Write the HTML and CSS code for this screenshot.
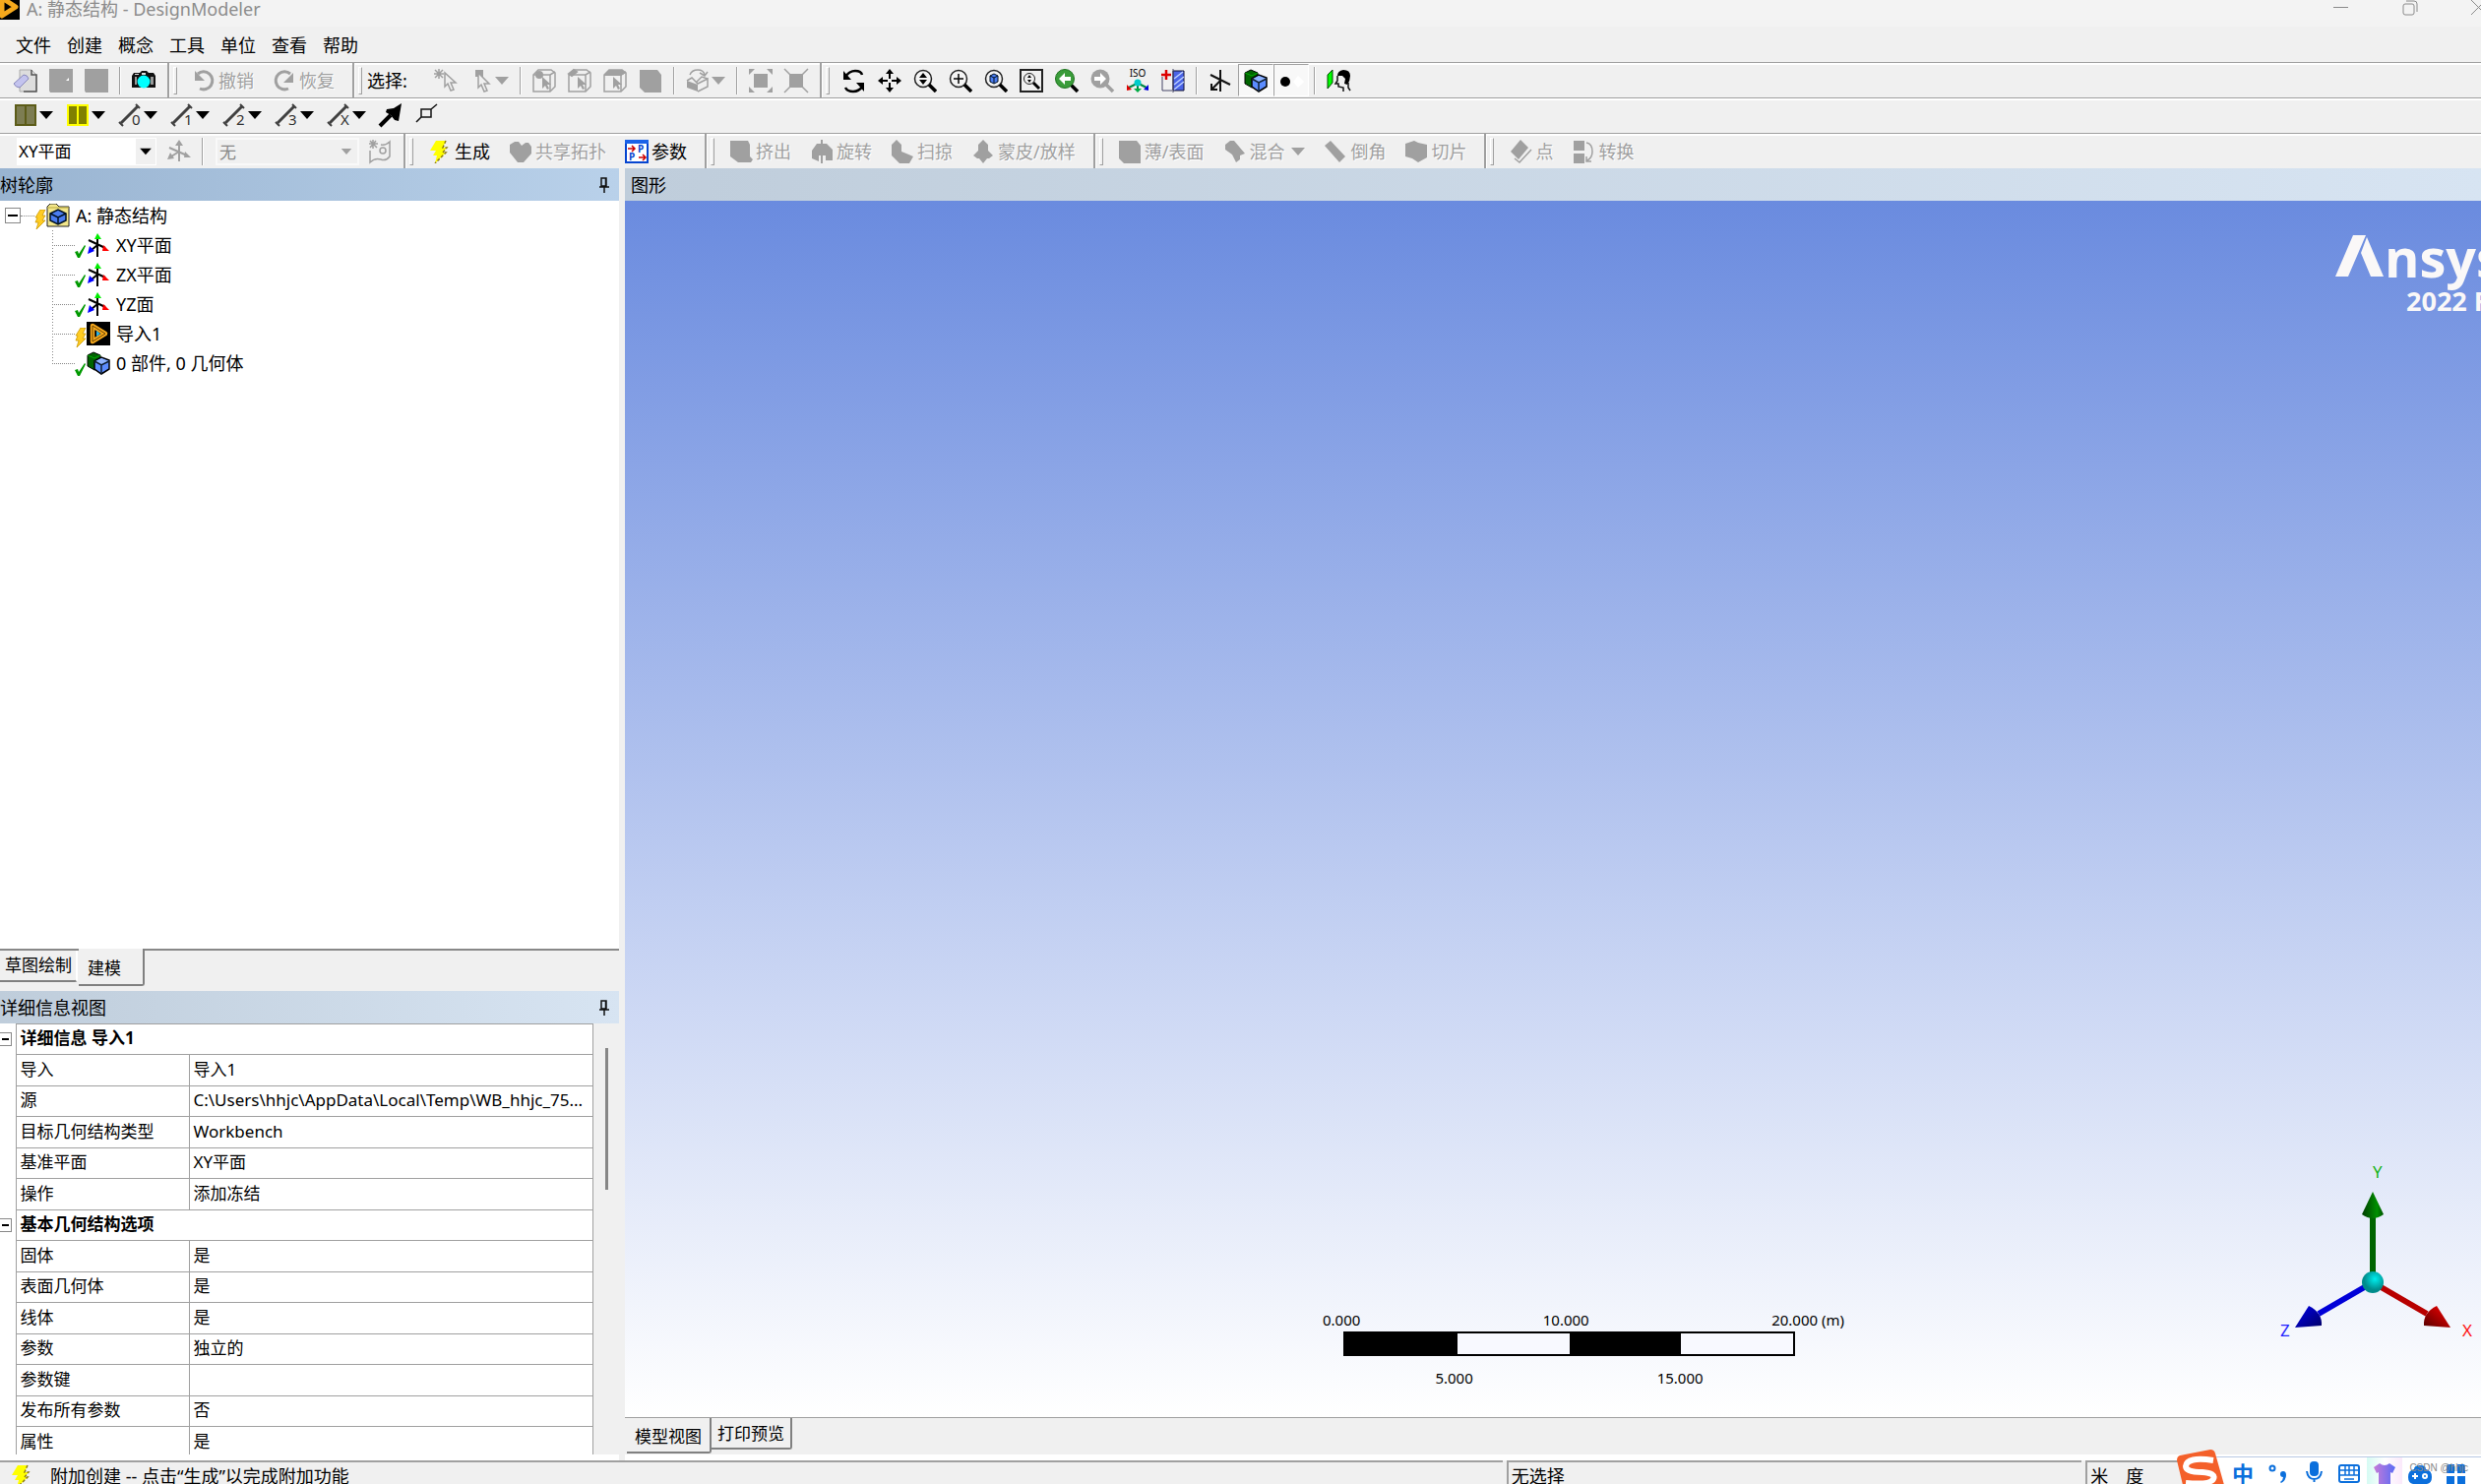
FILE: index.html
```html
<!DOCTYPE html>
<html lang="zh-CN">
<head>
    <meta charset="UTF-8">
    <meta name="viewport" content="width=device-width, initial-scale=1.0">
    <title>A: 静态结构 - DesignModeler</title>
    <link rel="stylesheet" href="styles.css">
</head>
<body>
    <!-- shared icons -->
    <svg class="defs" aria-hidden="true">
        <symbol id="down" viewBox="0 0 14 24"><path d="M0 8h14l-7 8z" fill="currentColor"/></symbol>
        <symbol id="bolt" viewBox="0 0 24 24"><path d="M8 1h10l-3 7h4l-4 5h3L7 24l2-8H5l3-5H2z" fill="#ff0"/><path d="M18 1l-3 7h4l-4 5h3L7 24" fill="none" stroke="#8a7a10" stroke-width="1.500" stroke-dasharray="3 2"/></symbol>
        <symbol id="smallbolt" viewBox="0 0 12 20"><path d="M6 0h5L8 6h3l-3 5h3L2 20l2-7H1l2-5H1z" fill="#fc2" stroke="#c90" stroke-width=".8"/></symbol>
        <symbol id="check" viewBox="0 0 12 20"><path d="M0 13l3-1 1 3 6-9 1 1-6 12H3z" fill="#090"/></symbol>
        <symbol id="axis" viewBox="0 0 24 24"><path d="M11 4v20M2 7l17 8M11 12l-6 5" stroke="#000" stroke-width="2" fill="none"/><path d="M8 6l3-6 4 6z" fill="#0e0"/><path d="M17 12l6 6h-7z" fill="#f00"/><path d="M3 13l5 5-7 3z" fill="#00f"/></symbol>
        <symbol id="cubes" viewBox="0 0 24 24"><path d="M1 4l6-3 7 3v12l-6 3-7-4z" fill="#006400" stroke="#000"/><path d="M1 4l7 3 6-3" fill="none" stroke="#0a0"/><path d="M8 10l7-4 8 3v9l-8 5-7-5z" fill="#5b8cff" stroke="#000" stroke-width="1.500"/><path d="M9 10l6-3 7 3-7 3z" fill="#8fb4ff"/><path d="M8 10l7 4 8-4M15 14v9" fill="none" stroke="#123" stroke-width="1.500"/></symbol>
        <symbol id="line" viewBox="0 0 24 24"><path d="M3 20L20 3" stroke="#404040" stroke-width="3"/><path d="M1 19l4 4M18 1l4 4" stroke="#404040" stroke-width="2"/></symbol>
        <symbol id="lens" viewBox="0 0 24 24"><circle cx="10" cy="10" r="8.500" fill="#f4f4f4" stroke="#222" stroke-width="1.500"/><path d="M16 16l7 7" stroke="#000" stroke-width="3.500"/></symbol>
        <symbol id="cube" viewBox="0 0 24 24"><path d="M1 6v17h17l5-5V4l-4-3H6z" fill="none" stroke="#a0a0a0" stroke-width="1.500"/><path d="M1 6h17l5-3M18 6v17" fill="none" stroke="#a0a0a0" stroke-width="1.500"/></symbol>
        <symbol id="cursor" viewBox="0 0 24 24"><path d="M11 4v14l3-3 3 7 3-1-3-7h5z" fill="none" stroke="#a0a0a0" stroke-width="1.500"/></symbol>
        <symbol id="minicursor" viewBox="0 0 24 24"><path d="M10 8v12l3-3 2 4 2-1-2-4h4z" fill="#a0a0a0"/></symbol>
        <symbol id="solid" viewBox="0 0 24 24"><path d="M1 1h18l4 5v18H6l-5-5z" fill="#a0a0a0"/></symbol>
        <symbol id="pin" viewBox="0 0 12 20"><path d="M3 3h5v8H3zM7.500 3v8M1 12h10M6 12v6" fill="none" stroke="#111" stroke-width="1.500"/></symbol>
        <symbol id="dm" viewBox="0 0 24 24"><rect width="24" height="24" fill="#000"/><path d="M6 4l13 8-13 8z" fill="none" stroke="#f5a81c" stroke-width="4.500" stroke-linejoin="round"/><path d="M6 4l13 8-13 8z" fill="none" stroke="#6b4400"/><path d="M10 9l4 3-4 3z" fill="#29b6e8"/></symbol>
    </svg>

    <header class="titlebar">
        <svg class="app-icon" viewBox="0 0 20 20"><path d="M0 0h20v20H0z"/><path d="M2-2l14 9-14 9z" fill="none" stroke="#f5a81c" stroke-width="5" stroke-linejoin="round"/></svg>
        <span class="title">A: 静态结构 - DesignModeler</span>
        <button class="win-btn" aria-label="最小化"><svg viewBox="0 0 16 16"><path d="M0 7.500h15"/></svg></button>
        <button class="win-btn" aria-label="还原"><svg viewBox="0 0 16 16"><rect x="1" y="4" width="11" height="11" rx="2"/><path d="M4 1h8q3 0 3 3v8"/></svg></button>
        <button class="win-btn" aria-label="关闭"><svg viewBox="0 0 16 16"><path d="M0 0l15 15M15 0L0 15"/></svg></button>
    </header>

    <nav class="menubar">
        <button>文件</button><button>创建</button><button>概念</button><button>工具</button><button>单位</button><button>查看</button><button>帮助</button>
    </nav>

    <div class="toolbar">
        <div class="band first">
            <button class="tool" aria-label="新建"><svg viewBox="0 0 24 24"><path d="M6 1h12l5 5v17H6z" fill="#ddd" stroke="#aaa"/><path d="M18 1v5h5v17H10" fill="none" stroke="#555" stroke-width="1.500"/><path d="M0 15L10 6q4 0 5 4L6 19q-4 0-6-4z" fill="#c3c3ee" stroke="#88b"/></svg></button>
            <button class="tool" disabled aria-label="打开"><svg viewBox="0 0 24 24"><path d="M0 0h24v24H1l-1-2z" fill="#a0a0a0"/><path d="M17 12l3-3v3z" fill="#fff"/></svg></button>
            <button class="tool" disabled aria-label="保存"><svg viewBox="0 0 24 24"><path d="M0 0h24v24H1l-1-2z" fill="#a0a0a0"/></svg></button>
            <i class="sep"></i>
            <button class="tool" aria-label="截图"><svg viewBox="0 0 24 24"><path d="M0 7l2-3h6l2-2h5l2 2h5l2 3v12H0z" fill="#111"/><path d="M3 8h2v8H3zM19 8h3v8h-3z" fill="#999"/><path d="M10 4h4v2h-4zM3 5h4v1H3z" fill="#ddd"/><circle cx="12" cy="13" r="6.500" fill="#0ff"/></svg></button>
        </div>
        <div class="band text-band">
            <i class="grip"></i>
            <button class="tool" disabled><svg viewBox="0 0 24 24"><path d="M6 5a9 9 0 1 1 2 15" fill="none" stroke="#a0a0a0" stroke-width="3"/><path d="M3 2v10h10z" fill="#a0a0a0"/></svg>撤销</button>
            <button class="tool" disabled><svg viewBox="0 0 24 24"><path d="M18 5a9 9 0 1 0-2 15" fill="none" stroke="#a0a0a0" stroke-width="3"/><path d="M21 4v10H11z" fill="#a0a0a0"/></svg>恢复</button>
        </div>
        <div class="band">
            <i class="grip"></i>
            <span class="label">选择:</span>
            <button class="tool" disabled aria-label="新选择"><svg viewBox="0 0 24 24"><path d="M5 0v10M0 5h10M1 1l8 8M9 1L1 9" stroke="#a0a0a0" stroke-width="1.500"/><use href="#cursor"/></svg></button>
            <button class="tool split" disabled aria-label="选择模式"><svg viewBox="0 0 24 24"><path d="M6 1h8v7H6z" fill="#a0a0a0"/><path d="M9 4v15l3-3 3 7 3-1-3-7h5z" fill="#f0f0f0" stroke="#a0a0a0" stroke-width="1.500"/></svg><svg class="down"><use href="#down"/></svg></button>
            <i class="sep"></i>
            <button class="tool" disabled aria-label="点"><svg viewBox="0 0 24 24"><use href="#cube"/><circle cx="7" cy="6" r="4" fill="#a0a0a0"/><use href="#minicursor"/></svg></button>
            <button class="tool" disabled aria-label="边"><svg viewBox="0 0 24 24"><use href="#cube"/><path d="M1 5l5-4 3 2-5 4z" fill="#a0a0a0" stroke="#a0a0a0" stroke-width="2"/><use href="#minicursor"/></svg></button>
            <button class="tool" disabled aria-label="面"><svg viewBox="0 0 24 24"><use href="#cube"/><path d="M1 6l5-5h13l4 3-5 3H1z" fill="#a0a0a0"/><use href="#minicursor"/></svg></button>
            <button class="tool" disabled aria-label="体"><svg><use href="#solid"/></svg></button>
            <i class="sep"></i>
            <button class="tool split" disabled aria-label="扩展选择"><svg viewBox="0 0 24 24"><path d="M1 12l11 4v7L1 19z" fill="#a0a0a0"/><path d="M1 12l5-3 6 6 10-5v8l-10 5M22 10l-6-2-5 5M4 6q2-5 8-5 6 0 7 5M14 4l5 3 3-4" fill="none" stroke="#a0a0a0" stroke-width="1.500"/></svg><svg class="down"><use href="#down"/></svg></button>
            <i class="sep"></i>
            <button class="tool" disabled aria-label="扩展"><svg viewBox="0 0 24 24"><path d="M5 5h14v14H5zM0 0h6L0 6zM24 0v6l-6-6zM0 24v-6l6 6zM24 24h-6l6-6z" fill="#a0a0a0"/></svg></button>
            <button class="tool" disabled aria-label="收缩"><svg viewBox="0 0 24 24"><path d="M5 5h14v14H5z" fill="#a0a0a0"/><path d="M0 0l8 8M24 0l-8 8M0 24l8-8M24 24l-8-8" stroke="#a0a0a0" stroke-width="1.500"/></svg></button>
        </div>
        <div class="band last">
            <i class="grip"></i>
            <button class="tool" aria-label="旋转"><svg viewBox="0 0 24 24"><path d="M3 8q4-6 10-6 6 0 7 4M21 17q-4 6-10 6-6 0-8-4" fill="none" stroke="#000" stroke-width="2.500"/><path d="M1 2v9h8zM22 23v-9h-8z"/></svg></button>
            <button class="tool" aria-label="平移"><svg viewBox="0 0 24 24"><path d="M12 3v7M12 14v7M3 12h7M14 12h7" stroke="#000" stroke-width="2"/><path d="M8 5l4-5 4 5zM8 19l4 5 4-5zM5 8l-5 4 5 4zM19 8l5 4-5 4z"/></svg></button>
            <button class="tool" aria-label="缩放"><svg viewBox="0 0 24 24"><use href="#lens"/><path d="M6 9l4-5 4 5zM6 11h8l-4 5z"/></svg></button>
            <button class="tool" aria-label="框放大"><svg viewBox="0 0 24 24"><use href="#lens"/><path d="M10 5v10M5 10h10" stroke="#000" stroke-width="1.500"/></svg></button>
            <button class="tool" aria-label="适合窗口"><svg viewBox="0 0 24 24"><use href="#lens"/><path d="M6 7l4-2 4 2v6l-4 2-4-2z" fill="#4a7cf0" stroke="#012"/><path d="M6 7l4 2 4-2M10 9v6" fill="none" stroke="#012"/></svg></button>
            <button class="tool" aria-label="放大镜"><svg viewBox="0 0 24 24"><path d="M1 1h22v22H1z" fill="none" stroke="#222" stroke-width="2"/><circle cx="10" cy="10" r="5.500" fill="none" stroke="#222"/><path d="M14 14l6 6" stroke="#000" stroke-width="3"/><path d="M8 9l2-3 2 3zM8 11h4l-2 3z"/></svg></button>
            <button class="tool" aria-label="上一视图"><svg viewBox="0 0 24 24"><path d="M16 16l7 7" stroke="#000" stroke-width="3.500"/><circle cx="10" cy="10" r="9.500" fill="#3a9c3a" stroke="#1d731d"/><path d="M4 10l6-6v4h6v4h-6v4z" fill="#fff"/></svg></button>
            <button class="tool" disabled aria-label="下一视图"><svg viewBox="0 0 24 24"><path d="M16 16l7 7" stroke="#a0a0a0" stroke-width="3.500"/><circle cx="10" cy="10" r="9.500" fill="#a0a0a0"/><path d="M16 10l-6-6v4H4v4h6v4z" fill="#fff"/></svg></button>
            <button class="tool" aria-label="等轴测"><svg viewBox="0 0 24 24"><text x="12" y="8" class="iso">ISO</text><path d="M12 15v7M11 15l-8 4M13 15l8 4" stroke="#084" stroke-width="2"/><circle cx="12" cy="14" r="3.500" fill="#0cc"/><path d="M1 16v6l5-1z" fill="#d00"/><path d="M23 16v6l-5-1z" fill="#00d"/><path d="M8 20h8l-4 4z" fill="#0a4"/></svg></button>
            <button class="tool" aria-label="观察面"><svg viewBox="0 0 24 24"><path d="M12 2h11v20H12z" fill="#4a63e6" stroke="#113"/><path d="M13 10l9-7M13 16l10-8M13 21l10-8" stroke="#bcd0ff" stroke-width="1.500"/><path d="M1 8v14h10M12 0v24" fill="none" stroke="#446"/><path d="M5 1v10M0 6h10" stroke="#d00" stroke-width="2.500"/></svg></button>
            <i class="sep"></i>
            <button class="tool" aria-label="显示平面"><svg viewBox="0 0 24 24"><path d="M12 1v22M2 6l20 10M12 12l-8 8M3 15v6h6" fill="none" stroke="#111" stroke-width="2"/></svg></button>
            <button class="tool pressed" aria-label="显示模型"><svg><use href="#cubes"/></svg></button>
            <button class="tool pressed" aria-label="显示点"><svg viewBox="0 0 24 24"><circle cx="6" cy="13" r="5"/><path d="M19 7l6 6-6 6-5-6z" fill="#fff"/></svg></button>
            <i class="sep"></i>
            <button class="tool" aria-label="显示面"><svg viewBox="0 0 24 24"><path d="M1 6l5-5v13l-5 6z" fill="#0f0" stroke="#040"/><path d="M11 7v5l-2 3h3v3l5 1v4M22 14v5l2 3" fill="none" stroke="#111" stroke-width="1.500"/><path d="M11 7q0-5 6-6 7 0 7 6 0 5-3 9l-3-1 1-5-3-3z"/></svg></button>
        </div>
    </div>

    <div class="toolbar lines">
        <button class="tool split" aria-label="面颜色"><svg viewBox="0 0 24 24"><path d="M2 2h20v20H2z" fill="#7d7d52" stroke="#5c5c18" stroke-width="2"/><path d="M12 2v20" stroke="#5c5c18" stroke-width="2"/></svg><svg class="down"><use href="#down"/></svg></button>
        <button class="tool split" aria-label="边颜色"><svg viewBox="0 0 24 24"><path d="M2 2h20v20H2z" fill="#808000" stroke="#ff0" stroke-width="2"/><path d="M12 2v20" stroke="#ff0" stroke-width="2"/></svg><svg class="down"><use href="#down"/></svg></button>
        <button class="tool split" aria-label="边 0"><svg viewBox="0 0 24 24"><use href="#line"/><text x="14" y="22" class="num">0</text></svg><svg class="down"><use href="#down"/></svg></button>
        <button class="tool split" aria-label="边 1"><svg viewBox="0 0 24 24"><use href="#line"/><text x="14" y="22" class="num">1</text></svg><svg class="down"><use href="#down"/></svg></button>
        <button class="tool split" aria-label="边 2"><svg viewBox="0 0 24 24"><use href="#line"/><text x="14" y="22" class="num">2</text></svg><svg class="down"><use href="#down"/></svg></button>
        <button class="tool split" aria-label="边 3"><svg viewBox="0 0 24 24"><use href="#line"/><text x="14" y="22" class="num">3</text></svg><svg class="down"><use href="#down"/></svg></button>
        <button class="tool split" aria-label="边 X"><svg viewBox="0 0 24 24"><use href="#line"/><text x="14" y="22" class="num">X</text></svg><svg class="down"><use href="#down"/></svg></button>
        <button class="tool" aria-label="方向"><svg viewBox="0 0 24 24"><path d="M1 23L12 12" stroke="#000" stroke-width="4"/><path d="M23 0l-3 18-4-1-4-5-5-3 1-3 7-1z"/></svg></button>
        <button class="tool" aria-label="顶点"><svg viewBox="0 0 24 24"><path d="M6 6h10v8H6zM16 6l6-5M6 14l-5 5" fill="none" stroke="#111" stroke-width="1.500"/></svg></button>
    </div>

    <div class="toolbar">
        <div class="band first">
            <div class="combo">
                <select aria-label="平面"><option>XY平面</option></select>
                <svg class="down"><use href="#down"/></svg>
            </div>
            <button class="tool" disabled aria-label="新平面"><svg viewBox="0 0 24 24"><path d="M12 4v18M2 8l18 8M12 12l-8 5" fill="none" stroke="#a0a0a0" stroke-width="2"/><path d="M8 6l4-6 4 6zM18 12l6 6h-7zM3 13l4 6-7 1z" fill="#a0a0a0"/></svg></button>
            <i class="sep"></i>
            <div class="combo off">
                <select aria-label="草图" disabled><option>无</option></select>
                <svg class="down"><use href="#down"/></svg>
            </div>
            <button class="tool" disabled aria-label="新草图"><svg viewBox="0 0 24 24"><path d="M5 0v9M1 4h9M2 1l7 7M8 1L2 8M2 11v12q5-5 11-3 5 2 9-3V2q-4 4-9 3" fill="none" stroke="#a0a0a0" stroke-width="1.500"/><circle cx="15" cy="11" r="3" fill="none" stroke="#a0a0a0" stroke-width="1.500"/></svg></button>
        </div>
        <div class="band text-band">
            <i class="grip"></i>
            <button class="tool"><svg><use href="#bolt"/></svg>生成</button>
            <button class="tool" disabled><svg viewBox="0 0 24 24"><path d="M1 5l5-3h4l3 4 4-3h3l3 4v7l-8 9H9L1 13z" fill="#a0a0a0"/></svg>共享拓扑</button>
            <button class="tool"><svg viewBox="0 0 24 24"><path d="M1 1h22v22H1z" fill="#fff" stroke="#0645d0" stroke-width="2"/><path d="M0 0h24v4H0z" fill="#1b62e8"/><path d="M3 9h6M7 6l3 3-3 3M14 18h6M18 15l3 3-3 3" fill="none" stroke="#c00" stroke-width="1.500"/><text x="13" y="13" class="p">P</text><text x="4" y="21" class="p">P</text></svg>参数</button>
        </div>
        <div class="band text-band">
            <i class="grip"></i>
            <button class="tool" disabled><svg viewBox="0 0 24 24"><path d="M1 1h18l2 4v12l3 3-2 3H9l-8-6z" fill="#a0a0a0"/></svg>挤出</button>
            <button class="tool" disabled><svg viewBox="0 0 24 24"><path d="M2 19v-8l5-7h4V0h2v4h4l6 6v11h-7v-5h-3v8h-2v-8H9v6z" fill="#a0a0a0"/></svg>旋转</button>
            <button class="tool" disabled><svg viewBox="0 0 24 24"><path d="M1 5l5-5 5 5v7l5 2 7 3-4 7H9l-8-8z" fill="#a0a0a0"/></svg>扫掠</button>
            <button class="tool" disabled><svg viewBox="0 0 24 24"><path d="M12 0l5 5v6l5 5-4 3h-2l-4 5-4-5H6l-4-3 5-5V5z" fill="#a0a0a0"/></svg>蒙皮/放样</button>
        </div>
        <div class="band text-band">
            <i class="grip"></i>
            <button class="tool" disabled><svg><use href="#solid"/></svg>薄/表面</button>
            <button class="tool" disabled><svg viewBox="0 0 24 24"><path d="M3 5l5-4h4l11 13-5 2v4l-4 3-4-8-7-5z" fill="#a0a0a0"/></svg>混合<svg class="down"><use href="#down"/></svg></button>
            <button class="tool" disabled><svg viewBox="0 0 24 24"><path d="M1 6l6-5 15 16-6 6z" fill="#a0a0a0"/></svg>倒角</button>
            <button class="tool" disabled><svg viewBox="0 0 24 24"><path d="M1 4l9-3 4 2 9 2v13l-9 5-6-4-7-2z" fill="#a0a0a0"/></svg>切片</button>
        </div>
        <div class="band text-band last">
            <i class="grip"></i>
            <button class="tool" disabled><svg viewBox="0 0 24 24"><path d="M2 12L12 0l8 8-10 12z" fill="#a0a0a0"/><path d="M6 19l5 4 12-13" fill="none" stroke="#a0a0a0" stroke-width="1.500"/></svg>点</button>
            <button class="tool" disabled><svg viewBox="0 0 24 24"><path d="M2 1h11v10H2zM2 14h11v10H2z" fill="#a0a0a0"/><path d="M15 3q6 1 6 9 0 6-5 9M15 17v5h5" fill="none" stroke="#a0a0a0" stroke-width="1.500"/></svg>转换</button>
        </div>
    </div>

    <main class="workspace">
        <section class="side">
            <h2 class="pane-head active">树轮廓<svg class="pin"><use href="#pin"/></svg></h2>
            <div class="tree">
                <div class="node root"><button class="toggle" aria-label="折叠"></button><i class="dots"></i><svg class="state"><use href="#smallbolt"/></svg><svg class="kind" viewBox="0 0 24 24"><path d="M1 3l3-3h6l3 3h10v20H1z" fill="#f3e78b" stroke="#222"/><path d="M1 4h22" stroke="#b9a93c"/><path d="M4 10l8-4 8 4v7l-8 4-8-4z" fill="#4a7cf0" stroke="#012" stroke-width="1.500"/><path d="M4 10l8 4 8-4M12 14v7" fill="none" stroke="#012" stroke-width="1.500"/></svg>A: 静态结构</div>
                <ul>
                    <li class="node"><svg class="state"><use href="#check"/></svg><svg class="kind"><use href="#axis"/></svg>XY平面</li>
                    <li class="node"><svg class="state"><use href="#check"/></svg><svg class="kind"><use href="#axis"/></svg>ZX平面</li>
                    <li class="node"><svg class="state"><use href="#check"/></svg><svg class="kind"><use href="#axis"/></svg>YZ面</li>
                    <li class="node"><svg class="state"><use href="#smallbolt"/></svg><svg class="kind"><use href="#dm"/></svg>导入1</li>
                    <li class="node"><svg class="state"><use href="#check"/></svg><svg class="kind"><use href="#cubes"/></svg>0 部件, 0 几何体</li>
                </ul>
            </div>
            <div class="tabs side-tabs">
                <button class="tab">草图绘制</button>
                <button class="tab current">建模</button>
            </div>
            <h2 class="pane-head">详细信息视图<svg class="pin"><use href="#pin"/></svg></h2>
            <div class="details">
                <table>
                    <colgroup><col class="col-fold"><col class="col-name"><col></colgroup>
                    <tr><td class="fold"><button class="toggle" aria-label="折叠"></button></td><th colspan="2">详细信息 导入1</th></tr>
                    <tr><td class="fold"></td><td>导入</td><td>导入1</td></tr>
                    <tr><td class="fold"></td><td>源</td><td>C:\Users\hhjc\AppData\Local\Temp\WB_hhjc_75...</td></tr>
                    <tr><td class="fold"></td><td>目标几何结构类型</td><td>Workbench</td></tr>
                    <tr><td class="fold"></td><td>基准平面</td><td>XY平面</td></tr>
                    <tr><td class="fold"></td><td>操作</td><td>添加冻结</td></tr>
                    <tr><td class="fold"><button class="toggle" aria-label="折叠"></button></td><th colspan="2">基本几何结构选项</th></tr>
                    <tr><td class="fold"></td><td>固体</td><td>是</td></tr>
                    <tr><td class="fold"></td><td>表面几何体</td><td>是</td></tr>
                    <tr><td class="fold"></td><td>线体</td><td>是</td></tr>
                    <tr><td class="fold"></td><td>参数</td><td>独立的</td></tr>
                    <tr><td class="fold"></td><td>参数键</td><td></td></tr>
                    <tr><td class="fold"></td><td>发布所有参数</td><td>否</td></tr>
                    <tr><td class="fold"></td><td>属性</td><td>是</td></tr>
                </table>
                <div class="scroll"><i class="thumb"></i></div>
            </div>
        </section>

        <section class="graphics">
            <h2 class="pane-head">图形</h2>
            <div class="canvas">
                <div class="brand">
                    <div class="brand-name"><svg viewBox="0 0 50 42"><path d="M18 0h13L13 42H0zM32 2l17 40H36L26 18z" fill="#faf8f8"/></svg>nsys</div>
                    <div class="release">2022 R1</div>
                </div>
                <div class="ruler">
                    <div class="marks"><span>0.000</span><span>10.000</span><span>20.000 (m)</span></div>
                    <div class="bar"><i></i><i></i><i></i><i></i></div>
                    <div class="marks lower"><span>5.000</span><span>15.000</span></div>
                </div>
                <svg class="triad" viewBox="0 0 210 190">
                    <defs>
                        <linearGradient id="g"><stop offset="0" stop-color="#003c00"/><stop offset=".7" stop-color="#009000"/><stop offset="1" stop-color="#005000"/></linearGradient>
                        <linearGradient id="r" x1="0" y1="1" x2="1" y2="0"><stop offset="0" stop-color="#500"/><stop offset="1" stop-color="#f00"/></linearGradient>
                        <linearGradient id="b" x1="0" y1="0" x2="1" y2="1"><stop offset="0" stop-color="#00e"/><stop offset="1" stop-color="#006"/></linearGradient>
                        <radialGradient id="c" cx=".6" cy=".35"><stop offset="0" stop-color="#0ee"/><stop offset="1" stop-color="#008c8c"/></radialGradient>
                    </defs>
                    <path d="M101 120V46" stroke="#006400" stroke-width="6"/>
                    <path d="M101 20L90 43q11 8 22 0z" fill="url(#g)"/>
                    <path d="M106 115l50 29" stroke="#b80000" stroke-width="6"/>
                    <path d="M180 158l-14-22q-14 7-13 20z" fill="url(#r)"/>
                    <path d="M96 115l-50 29" stroke="#0000d8" stroke-width="6"/>
                    <path d="M22 158l14-22q14 7 13 20z" fill="url(#b)"/>
                    <circle cx="101" cy="112" r="11" fill="url(#c)"/>
                    <text x="101" y="6" fill="#1ab41a">Y</text>
                    <text x="7" y="167" fill="#22f">Z</text>
                    <text x="192" y="167" fill="#f11">X</text>
                </svg>
            </div>
            <div class="tabs view-tabs">
                <button class="tab current">模型视图</button>
                <button class="tab">打印预览</button>
            </div>
        </section>
    </main>

    <footer class="status">
        <div class="cell hint"><svg><use href="#bolt"/></svg>附加创建 -- 点击“生成”以完成附加功能</div>
        <div class="cell picked">无选择</div>
        <div class="cell units"><span>米</span><span>度</span></div>
    </footer>

    <!-- floating input method bar -->
    <div class="ime">
        <svg class="sogou" viewBox="0 0 48 36"><path d="M3 6L34 0q4 0 5 4l9 32H6L0 11q0-4 3-5z" fill="#f4602a"/><path d="M37 11Q10 7 9 17q0 6 17 6 14 1 11 7-3 6-28 4" fill="none" stroke="#fff" stroke-width="6"/></svg>
        <button class="ime-lang">中</button>
        <button aria-label="标点"><svg viewBox="0 0 24 24"><circle cx="6" cy="7" r="2.500" fill="none" stroke="#0b6fdc" stroke-width="2"/><path d="M14 13q0-3 3-3t3 4q0 5-5 8l-1-1q3-2 3-5-3 0-3-3z" fill="#0b6fdc"/></svg></button>
        <button aria-label="语音"><svg viewBox="0 0 24 24"><rect x="8" y="0" width="9" height="15" rx="4" fill="#0b6fdc"/><path d="M5 10q1 8 7.500 8T20 10M12.500 18v3" fill="none" stroke="#0b6fdc" stroke-width="2"/></svg></button>
        <button aria-label="键盘"><svg viewBox="0 0 24 24"><rect x="2" y="4" width="20" height="17" rx="2" fill="none" stroke="#0b6fdc" stroke-width="2"/><path d="M3 9h18M3 14h18M8 5v9M12 5v9M17 5v9M7 18h10" stroke="#0b6fdc" stroke-width="1.500"/></svg></button>
        <button class="skin" aria-label="皮肤"><svg viewBox="0 0 24 24"><defs><linearGradient id="s"><stop offset="0" stop-color="#c77bd8"/><stop offset="1" stop-color="#5a6cf5"/></linearGradient></defs><path d="M7 2q5 4 10 0l6 4-3 6-2-1v12H6V11l-2 1-3-6z" fill="url(#s)"/></svg></button>
        <button aria-label="工具"><svg viewBox="0 0 24 24"><path d="M6 8q0-4 6-4t6 4q6 1 6 8 0 6-5 7H5q-5-1-5-7 0-7 6-8z" fill="#0b6fdc"/><path d="M4 15h6M7 12v6" stroke="#fff" stroke-width="2"/><circle cx="17" cy="15" r="2" fill="none" stroke="#fff" stroke-width="2"/></svg></button>
        <button aria-label="更多"><svg viewBox="0 0 24 24"><path d="M3 5q0-2 2-2h6v9H3zM14 3h6q2 0 2 2v7h-8zM3 15h8v9H3zM14 15h8v9h-8z" fill="#0b6fdc"/></svg></button>
        <span class="credit">CSDN @hhjc</span>
    </div>
</body>
</html>
```
FILE: styles.css
```css
* {
    box-sizing: border-box;
    margin: 0;
    padding: 0;
}
:root {
    --face: #f0f0f0;
    --shade: #a0a0a0;
}
body {
    display: flex;
    flex-direction: column;
    height: 100vh;
    overflow: hidden;
    background-color: var(--face);
    font-family: "Noto Sans", "Noto Sans CJK SC", sans-serif;
    font-size: 18px;
    line-height: 24px;
    color: #000;
}
button, select {
    font: inherit;
    color: inherit;
    background: none;
    border: 0;
}
.defs {
    position: absolute;
    width: 0;
    height: 0;
}

/* title and menu */
.titlebar {
    display: flex;
    height: 27px;
    flex: none;
    background-color: #f3f3f3;
    color: #8c8c8c;
}
.app-icon {
    width: 20px;
    height: 20px;
}
.title {
    flex: 1;
    margin-left: 7px;
    line-height: 18px;
}
.win-btn {
    width: 16px;
    height: 16px;
    margin-left: 54px;
    flex: none;
}
.win-btn:last-child {
    margin-right: -6px;
}
.win-btn svg {
    display: block;
    fill: none;
    stroke: #8a8a8a;
}
.menubar {
    display: flex;
    gap: 16px;
    height: 36px;
    flex: none;
    padding: 2px 0 0 16px;
    align-items: center;
}

/* toolbars */
.toolbar {
    display: flex;
    height: 36px;
    flex: none;
    border-top: 1px solid var(--shade);
    box-shadow: inset 0 2px #fff;
}
.band {
    display: flex;
    align-items: center;
    padding-right: 6px;
    border-right: 2px solid var(--shade);
    box-shadow: 1px 0 #fff;
}
.band.last {
    border: 0;
    box-shadow: none;
}
.text-band {
    gap: 7px;
    padding-right: 12px;
}
.band.first {
    padding-left: 8px;
}
.grip {
    width: 4px;
    height: 28px;
    margin: 0 7px 0 4px;
    border: 1px solid #fff;
    border-right-color: var(--shade);
    border-bottom-color: var(--shade);
}
.text-band .grip {
    margin-right: 2px;
}
.sep {
    width: 2px;
    height: 28px;
    margin: 0 5px;
    background-color: var(--shade);
    border-right: 1px solid #fff;
}
.tool {
    display: flex;
    align-items: center;
    gap: 3px;
    height: 33px;
    padding: 0 6px;
    white-space: nowrap;
}
.tool svg {
    width: 24px;
    height: 24px;
    flex: none;
    overflow: visible;
}
.tool.split {
    gap: 2px;
}
.tool:disabled {
    color: var(--shade);
    text-shadow: 1px 1px #fff;
}
.tool .down {
    width: 14px;
}
.text-band .down {
    margin-left: 4px;
}
.tool.pressed {
    background-color: #f8f8f8;
    border: 1px solid #fff;
    border-top-color: var(--shade);
    border-left-color: var(--shade);
    padding: 0 5px;
}
.label {
    width: 62px;
    margin-left: -2px;
}
.lines {
    gap: 1px;
    padding-left: 8px;
}
.num {
    font-size: 15px;
    fill: #333;
}
.iso {
    font-size: 10px;
    text-anchor: middle;
}
.p {
    font-size: 10px;
    font-weight: bold;
    fill: #0645d0;
}
.combo {
    position: relative;
    width: 142px;
    height: 28px;
    margin: 0 5px 0 9px;
    background-color: #fff;
}
.combo select {
    width: 100%;
    height: 28px;
    padding-left: 2px;
    appearance: none;
    font-size: 17px;
}
.combo .down {
    position: absolute;
    top: 1px;
    right: 1px;
    width: 20px;
    height: 26px;
    padding: 3px;
    background-color: var(--face);
}
.combo.off {
    width: 146px;
    margin: 0 3px 0 7px;
    background-color: var(--face);
    border: 2px solid #f9f9f9;
    color: #888;
}
.combo.off select {
    height: 24px;
    opacity: 1;
}
.combo.off .down {
    top: 0;
    height: 24px;
    color: var(--shade);
}

/* panes */
.workspace {
    display: flex;
    flex: 1;
    min-height: 0;
}
.side {
    display: flex;
    flex-direction: column;
    width: 629px;
    flex: none;
}
.pane-head {
    display: flex;
    justify-content: space-between;
    align-items: center;
    height: 33px;
    flex: none;
    font-size: 18px;
    font-weight: normal;
    background-image: linear-gradient(to right, #bfcddb, #d7e4f2);
}
.pane-head.active {
    background-image: linear-gradient(to right, #99b4d1, #b9d1ea);
}
.pin {
    width: 12px;
    height: 20px;
    margin-right: 9px;
}
.tree {
    flex: 1;
    min-height: 0;
    background-color: #fff;
    border-bottom: 2px solid #888;
}
.node {
    display: flex;
    align-items: center;
    height: 30px;
    list-style: none;
}
.root {
    padding-left: 5px;
}
.toggle {
    width: 16px;
    height: 16px;
    border: 1px solid #888;
    background: linear-gradient(#000, #000) center / 10px 2px no-repeat #fff;
    flex: none;
}
.dots {
    width: 14px;
    border-top: 1px dotted #888;
}
.state {
    width: 12px;
    height: 20px;
    margin-top: 8px;
}
.kind {
    width: 24px;
    height: 24px;
    margin: 0 6px 0 0;
}
.tree ul {
    padding-left: 53px;
}
.tree li {
    background: repeating-linear-gradient(to bottom, #888 0 1px, #fff 1px 3px) left top / 1px 100% no-repeat;
}
.tree li:last-child {
    background-size: 1px 50%;
}
.tree li::before {
    content: "";
    width: 23px;
    border-top: 1px dotted #888;
}

/* tabs */
.tabs {
    display: flex;
    align-items: flex-start;
    flex: none;
    font-size: 17px;
}
.side-tabs {
    height: 41px;
}
.tab {
    height: 32px;
    padding: 0 6px;
    border-right: 2px solid #808080;
    border-bottom: 2px solid #808080;
    border-bottom-right-radius: 3px;
    white-space: nowrap;
}
.tab.current {
    height: 36px;
    padding-top: 2px;
    background-color: var(--face);
}
.side-tabs .tab {
    width: 79px;
    padding: 0 0 0 5px;
    text-align: left;
    border-right-color: #fff;
}
.side-tabs .current {
    width: 67px;
    margin: -2px 0 0 1px;
    padding: 3px 0 0 9px;
    height: 38px;
    border-right-color: #808080;
}

/* details table */
.details {
    display: flex;
    height: 444px;
    flex: none;
    overflow: hidden;
    background-color: #fff;
    border-bottom: 6px solid #fff;
}
table {
    width: 603px;
    border-collapse: collapse;
    table-layout: fixed;
    font-size: 17px;
}
.col-fold {
    width: 16px;
}
.col-name {
    width: 176px;
}
tr {
    height: 31px;
}
tr:nth-child(even) {
    height: 32px;
}
td, th {
    padding: 0 4px 2px;
    border: 1px solid var(--shade);
    text-align: left;
    white-space: nowrap;
    overflow: hidden;
}
.fold {
    padding: 0;
    border-width: 0 1px 0 0;
}
.fold .toggle {
    display: block;
    width: 12px;
    height: 14px;
    border-left: 0;
    background-size: 7px 2px;
}
.scroll {
    flex: 1;
    padding: 25px 0 0 12px;
    background-color: var(--face);
}
.thumb {
    display: block;
    width: 3px;
    height: 144px;
    background-color: #868686;
}

/* graphics window */
.graphics {
    display: flex;
    flex-direction: column;
    flex: 1;
    min-width: 0;
    margin-left: 6px;
}
.graphics .pane-head {
    padding-left: 6px;
}
.canvas {
    position: relative;
    flex: 1;
    overflow: hidden;
    background-image: linear-gradient(#6a8bdf, #fff);
    border-bottom: 1px solid var(--shade);
}
.brand {
    position: absolute;
    top: 30px;
    right: 0;
    width: 148px;
    color: #faf8f8;
    font-family: "Open Sans", sans-serif;
    font-weight: bold;
    white-space: nowrap;
}
.brand-name {
    display: flex;
    font-size: 54px;
    line-height: 54px;
}
.brand-name svg {
    width: 50px;
    height: 42px;
    margin-top: 5px;
    flex: none;
}
.release {
    padding: 6px 0 0 72px;
    font-size: 27px;
}
.ruler {
    position: absolute;
    left: 730px;
    bottom: 28px;
    width: 459px;
    font-size: 15px;
}
.marks {
    display: flex;
    justify-content: space-between;
    margin: 0 -50px 0 -21px;
}
.lower {
    justify-content: space-around;
    margin: 10px 0 0;
}
.bar {
    display: flex;
    height: 25px;
    border: 2px solid #000;
}
.bar i {
    flex: 1;
    background-color: #000;
}
.bar i:nth-child(even) {
    background-color: #f8f9ff;
}
.triad {
    position: absolute;
    right: 1px;
    bottom: 59px;
    width: 210px;
    height: 190px;
    overflow: visible;
    font-size: 17px;
}
.view-tabs {
    height: 43px;
    padding-left: 2px;
    border-bottom: 6px solid #fff;
}
.view-tabs .tab {
    padding: 2px 6px 0;
}
.view-tabs .current {
    padding: 4px 8px 0;
}

/* status bar */
.status {
    display: flex;
    gap: 4px;
    height: 24px;
    flex: none;
}
.cell {
    display: flex;
    padding-left: 3px;
    border-top: 2px solid var(--shade);
    border-left: 2px solid var(--shade);
    line-height: 28px;
    white-space: nowrap;
}
.hint {
    flex: 1529;
    padding-left: 10px;
    border-left: 0;
}
.hint svg {
    width: 24px;
    height: 24px;
    margin: 2px 17px 0 0;
    flex: none;
}
.picked {
    flex: 584;
}
.units {
    flex: 400;
    gap: 18px;
}

/* input method bar */
.ime {
    position: absolute;
    right: 0;
    bottom: 0;
    display: flex;
    width: 281px;
    height: 28px;
    padding-left: 21px;
    background-color: #fff;
    border-top: 1px solid #b9c9e4;
    color: #0b6fdc;
}
.ime button {
    width: 36px;
    height: 28px;
    padding: 4px 6px 0;
}
.ime button svg {
    display: block;
    width: 24px;
    height: 24px;
}
.ime .ime-lang {
    padding: 4px 0 0;
    font-size: 22px;
    font-weight: bold;
}
.ime .skin {
    background-image: linear-gradient(to right, #d5fbf3, #fff, #fbe9fb);
}
.sogou {
    position: absolute;
    left: -28px;
    bottom: -1px;
    width: 48px;
    height: 36px;
}
.credit {
    position: absolute;
    right: 13px;
    top: 4px;
    font-family: "Liberation Sans", sans-serif;
    font-size: 10px;
    line-height: 14px;
    color: #888;
}
```
